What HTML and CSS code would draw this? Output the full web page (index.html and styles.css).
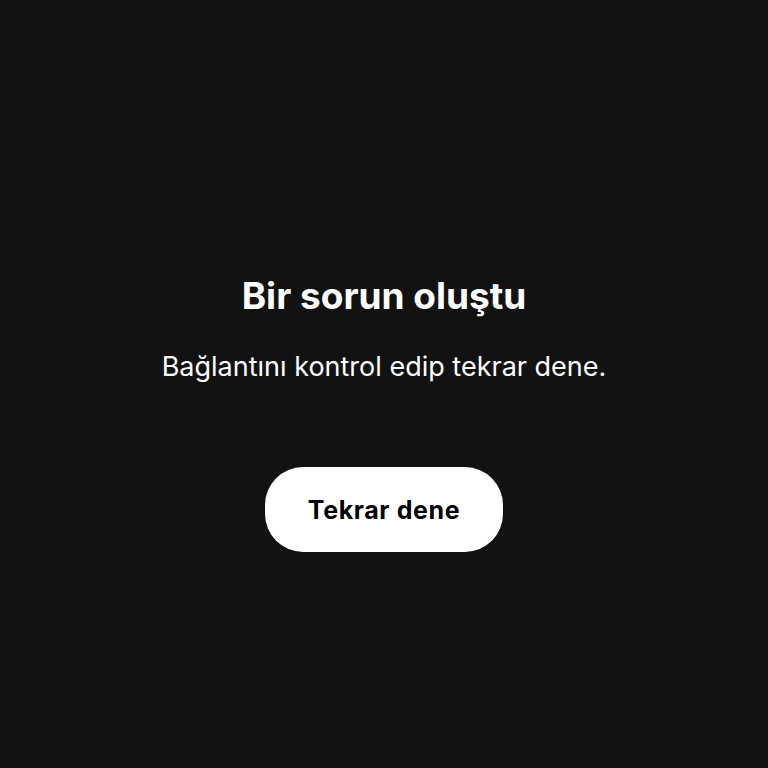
FILE: index.html
```html
<!DOCTYPE html>
<html lang="tr">
<head>
<meta charset="utf-8">
<link rel="stylesheet" href="styles.css">
</head>
<body>
<main class="error">
  <h1 class="error-title">Bir sorun oluştu</h1>
  <p class="error-text">Bağlantını kontrol edip tekrar dene.</p>
  <button class="retry">Tekrar dene</button>
</main>
</body>
</html>
```
FILE: styles.css
```css
html, body {
  margin: 0;
  padding: 0;
  background: #121212;
}
body {
  width: 768px;
  height: 768px;
  font-family: Inter, "Liberation Sans", sans-serif;
}
.error {
  display: flex;
  flex-direction: column;
  align-items: center;
  padding-top: 273px;
}
.error-title {
  margin: 0;
  font-size: 37px;
  line-height: 46px;
  font-weight: 700;
  color: #ffffff;
  letter-spacing: 0;
}
.error-text {
  margin: 31px 0 0;
  font-size: 27px;
  line-height: 34px;
  font-weight: 400;
  color: #ffffff;
  letter-spacing: 0;
}
.retry {
  margin-top: 83px;
  width: 238px;
  height: 85px;
  border: none;
  border-radius: 38px;
  background: #ffffff;
  color: #000000;
  font-family: inherit;
  font-size: 25px;
  font-weight: 700;
  letter-spacing: 0.6px;
  padding: 0;
}
```
